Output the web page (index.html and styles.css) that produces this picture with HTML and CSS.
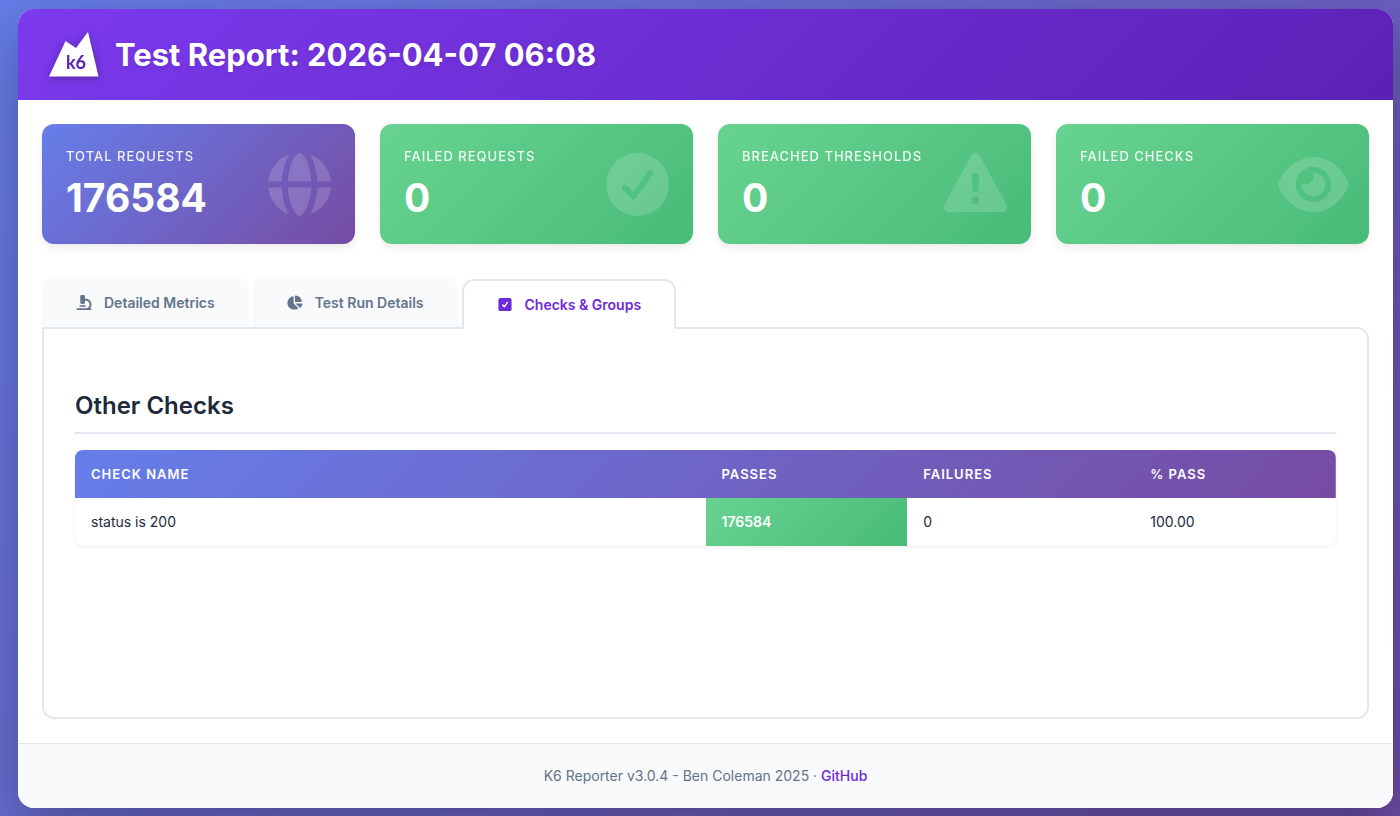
FILE: index.html
```html
<!DOCTYPE html>
<html lang="en">
<head>
    <meta charset="UTF-8">
    <meta name="viewport" content="width=device-width, initial-scale=1.0">
    <title>Test Report: 2026-04-07 06:08</title>
    <link rel="stylesheet" href="styles.css">
</head>
<body>
    <div class="container">
        <header>
            <svg class="logo" viewBox="0 0 50 45" aria-hidden="true">
                <path fill="#fff" d="M0 44.500L16.500 9l10.500 7L39 0l10.500 44.500z"/>
                <text class="logo-text" x="17" y="37">k6</text>
            </svg>
            <h1>Test Report: 2026-04-07 06:08</h1>
        </header>

        <main>
            <section class="cards">
                <div class="card">
                    <div>
                        <h2>Total Requests</h2>
                        <div class="value">176584</div>
                    </div>
                    <svg class="card-icon" viewBox="0 0 512 512" aria-hidden="true"><path d="M351.9 280l-190.9 0c2.9 64.5 17.2 123.9 37.500 167.400 11.400 24.500 23.700 41.800 35.100 52.400 11.200 10.500 18.900 12.200 22.900 12.200s11.700-1.700 22.900-12.200c11.400-10.600 23.700-28 35.100-52.400 20.300-43.500 34.600-102.900 37.500-167.400zM160.900 232l190.900 0C349 167.500 334.700 108.100 314.400 64.600 303 40.200 290.700 22.800 279.300 12.200 268.100 1.700 260.400 0 256.400 0s-11.700 1.700-22.900 12.200c-11.400 10.600-23.700 28-35.100 52.400-20.300 43.500-34.600 102.900-37.500 167.400zm-48 0C116.400 146.400 138.500 66.900 170.800 14.700 78.700 47.300 10.900 131.200 1.500 232l111.400 0zM1.500 280c9.400 100.800 77.200 184.700 169.300 217.300-32.300-52.200-54.400-131.700-57.900-217.300L1.500 280zm398.400 0c-3.500 85.600-25.600 165.100-57.900 217.300 92.100-32.700 159.900-116.500 169.300-217.300l-111.400 0zm111.400-48C501.900 131.200 434.100 47.300 342 14.700 374.300 66.900 396.400 146.400 399.900 232l111.400 0z"/></svg>
                </div>
                <div class="card good">
                    <div>
                        <h2>Failed Requests</h2>
                        <div class="value">0</div>
                    </div>
                    <svg class="card-icon" viewBox="0 0 512 512" aria-hidden="true"><path d="M256 512a256 256 0 1 1 0-512 256 256 0 1 1 0 512zM374 145.700c-10.700-7.800-25.700-5.400-33.500 5.300L221.100 315.200 169 263.100c-9.400-9.400-24.600-9.400-33.900 0s-9.400 24.600 0 33.900l72 72c5 5 11.900 7.500 18.800 7s13.400-4.100 17.500-9.800L379.300 179.200c7.800-10.700 5.400-25.700-5.300-33.500z"/></svg>
                </div>
                <div class="card good">
                    <div>
                        <h2>Breached Thresholds</h2>
                        <div class="value">0</div>
                    </div>
                    <svg class="card-icon" viewBox="0 0 512 512" aria-hidden="true"><path d="M256 0c14.700 0 28.200 8.100 35.200 21l216 400c6.700 12.400 6.400 27.400-.8 39.500S486.100 480 472 480L40 480c-14.100 0-27.200-7.400-34.400-19.500s-7.500-27.100-.8-39.500l216-400c7-12.900 20.500-21 35.200-21zm0 352a32 32 0 1 0 0 64 32 32 0 1 0 0-64zm0-192c-18.200 0-32.700 15.500-31.400 33.700l7.400 104c.9 12.500 11.400 22.300 23.900 22.300 12.600 0 23-9.700 23.900-22.300l7.400-104c1.300-18.200-13.100-33.700-31.400-33.700z"/></svg>
                </div>
                <div class="card good">
                    <div>
                        <h2>Failed Checks</h2>
                        <div class="value">0</div>
                    </div>
                    <svg class="card-icon wide" viewBox="0 0 576 512" aria-hidden="true"><path d="M288 32c-80.800 0-145.500 36.800-192.600 80.600C48.600 156 17.300 208 2.500 243.700c-3.300 7.900-3.300 16.700 0 24.600C17.300 304 48.600 356 95.400 399.400C142.500 443.200 207.200 480 288 480s145.500-36.800 192.600-80.600c46.800-43.500 78.100-95.400 93-131.100c3.300-7.900 3.300-16.700 0-24.600c-14.900-35.700-46.200-87.700-93-131.100C433.500 68.800 368.800 32 288 32zM144 256a144 144 0 1 1 288 0 144 144 0 1 1 -288 0zm144-64c0 35.300-28.700 64-64 64c-7.100 0-13.900-1.200-20.300-3.300c-5.500-1.800-11.900 1.600-11.700 7.400c.3 6.900 1.300 13.800 3.200 20.700c13.700 51.200 66.400 81.600 117.600 67.900s81.600-66.400 67.900-117.600c-11.100-41.500-47.800-69.400-88.600-71.100c-5.800-.2-9.200 6.100-7.400 11.700c2.100 6.400 3.300 13.200 3.300 20.300z"/></svg>
                </div>
            </section>

            <div class="tabs" role="tablist">
                <button class="tab" type="button" role="tab" aria-selected="false">
                    <svg class="tab-icon" viewBox="0 0 512 512" aria-hidden="true"><path d="M176 0c-26.500 0-48 21.500-48 48l0 208c0 26.500 21.500 48 48 48l64 0c26.500 0 48-21.500 48-48l0-64 32 0c70.700 0 128 57.300 128 128S390.700 448 320 448L32 448c-17.700 0-32 14.300-32 32s14.300 32 32 32l448 0c17.700 0 32-14.300 32-32s-14.300-32-32-32l-16.900 0c30.400-34 48.900-78.800 48.900-128 0-106-86-192-192-192l-32 0 0-80c0-26.500-21.500-48-48-48l-64 0zM120 352c-13.300 0-24 10.700-24 24s10.700 24 24 24l176 0c13.300 0 24-10.700 24-24s-10.700-24-24-24l-176 0z"/></svg>
                    Detailed Metrics
                </button>
                <button class="tab" type="button" role="tab" aria-selected="false">
                    <svg class="tab-icon" viewBox="16 0 576 512" aria-hidden="true"><path d="M304 240V16.600c0-9 7-16.600 16-16.600C443.700 0 544 100.300 544 224c0 9-7.600 16-16.600 16H304zM32 272C32 150.700 122.100 50.300 239 34.300c9.200-1.300 17 6.100 17 15.400V288L412.500 444.500c6.700 6.700 6.200 17.700-1.500 23.100C371.800 495.600 323.800 512 272 512C139.500 512 32 404.600 32 272zm526.400 16c9.300 0 16.600 7.800 15.400 17c-7.700 55.900-34.600 105.600-73.900 142.300c-6 5.600-15.400 5.200-21.200-.7L320 288H558.400z"/></svg>
                    Test Run Details
                </button>
                <button class="tab active" type="button" role="tab" aria-selected="true" aria-controls="checks">
                    <svg class="tab-icon" viewBox="0 0 512 512" aria-hidden="true"><rect x="32" y="32" width="448" height="448" rx="64"/><path class="tick" d="M176 270l60 60 104-144"/></svg>
                    Checks &amp; Groups
                </button>
            </div>

            <section class="panel" id="checks" role="tabpanel">
                <h2>Other Checks</h2>
                <table>
                    <thead>
                        <tr>
                            <th class="name">Check Name</th>
                            <th class="passes">Passes</th>
                            <th class="failures">Failures</th>
                            <th>% Pass</th>
                        </tr>
                    </thead>
                    <tbody>
                        <tr>
                            <td>status is 200</td>
                            <td class="good">176584</td>
                            <td>0</td>
                            <td>100.00</td>
                        </tr>
                    </tbody>
                </table>
            </section>
        </main>

        <footer>
            K6 Reporter v3.0.4 - Ben Coleman 2025 · <a href="https://github.com/benc-uk/k6-reporter">GitHub</a>
        </footer>
    </div>
</body>
</html>
```
FILE: styles.css
```css
* {
    box-sizing: border-box;
}

body {
    display: flex;
    min-height: 100vh;
    margin: 0;
    padding: 9px 7px 8px 18px;
    font-family: Inter, sans-serif;
    font-size: 14px;
    line-height: 24px;
    color: #1e293b;
    background: linear-gradient(135deg, #667eea 0%, #6c4da6 100%);
}

h1,
h2 {
    margin: 0;
}

.container {
    display: flex;
    flex-direction: column;
    flex: 1;
    min-width: 0;
    background: #fff;
    border-radius: 16px;
    overflow: hidden;
    box-shadow: 0 20px 60px rgba(0, 0, 0, 0.3);
}

header {
    display: flex;
    align-items: center;
    gap: 16px;
    padding: 20px 31px;
    color: #fff;
    background: linear-gradient(135deg, #7c3aed 0%, #5b21b6 100%);
}

header h1 {
    font-size: 31px;
    font-weight: 700;
    line-height: 51px;
    text-shadow: 0 2px 4px rgba(0, 0, 0, 0.1);
}

.logo {
    width: 50px;
    height: 45px;
    overflow: visible;
    filter: drop-shadow(0 2px 4px rgba(0, 0, 0, 0.3));
}

.logo-text {
    font-family: Lato, sans-serif;
    font-size: 18px;
    font-weight: 700;
    fill: #5b21b6;
}

main {
    display: flex;
    flex-direction: column;
    flex: 1;
    padding: 24px;
}

/* Summary cards */
.cards {
    display: grid;
    grid-template-columns: repeat(4, 1fr);
    gap: 25px;
    margin-bottom: 33px;
}

.card {
    display: flex;
    align-items: center;
    justify-content: space-between;
    height: 120px;
    padding: 0 24px;
    color: #fff;
    background: linear-gradient(135deg, #667eea 0%, #764ba2 100%);
    border-radius: 12px;
    box-shadow: 0 4px 8px rgba(0, 0, 0, 0.08);
}

.good {
    color: #fff;
    background: linear-gradient(135deg, #68d391 0%, #48bb78 100%);
}

.card h2 {
    margin-bottom: 8px;
    font-size: 13px;
    font-weight: 500;
    line-height: 20px;
    letter-spacing: 1px;
    text-transform: uppercase;
    white-space: nowrap;
    opacity: 0.9;
}

.card .value {
    font-size: 39px;
    font-weight: 700;
    line-height: 48px;
}

.card-icon {
    flex: none;
    width: 63px;
    height: 63px;
    fill: #fff;
    opacity: 0.16;
}

.card-icon.wide {
    width: 71px;
    margin-right: -4px;
}

/* Tabs */
.tabs {
    display: flex;
    align-items: flex-end;
    gap: 4px;
}

.tab {
    display: flex;
    align-items: center;
    gap: 12px;
    height: 50px;
    padding: 0 34px;
    font-family: inherit;
    font-size: 14px;
    font-weight: 600;
    color: #64748b;
    background: #f8fafc;
    border: none;
    border-radius: 12px 12px 0 0;
    cursor: pointer;
}

/* Sits over the top border of the panel */
.tab.active {
    z-index: 1;
    margin-bottom: -2px;
    padding: 0 33px 2px;
    color: #6d28d9;
    background: #fff;
    border: 2px solid #e2e8f0;
    border-bottom: none;
}

.tab-icon {
    width: 16px;
    height: 15px;
    fill: currentColor;
}

.tick {
    fill: none;
    stroke: #fff;
    stroke-width: 48;
    stroke-linecap: round;
    stroke-linejoin: round;
}

.panel {
    flex: 1;
    padding: 58px 31px 32px;
    border: 2px solid #e2e8f0;
    border-radius: 0 12px 12px 12px;
}

.panel h2 {
    margin-bottom: 16px;
    padding-bottom: 7px;
    font-size: 24px;
    font-weight: 600;
    line-height: 38px;
    border-bottom: 2px solid #e2e8f0;
}

table {
    width: 100%;
    table-layout: fixed;
    border-collapse: separate;
    border-spacing: 0;
    border-radius: 8px;
    overflow: hidden;
    box-shadow: 0 1px 3px rgba(0, 0, 0, 0.08);
}

thead tr {
    color: #fff;
    background: linear-gradient(135deg, #667eea 0%, #764ba2 100%);
}

th,
td {
    padding: 12px 16px;
    text-align: left;
}

th {
    font-size: 13px;
    font-weight: 600;
    letter-spacing: 1px;
    text-transform: uppercase;
}

.name {
    width: 50%;
}

.passes {
    width: 16%;
}

.failures {
    width: 18%;
}

td.good {
    font-weight: 600;
}

footer {
    padding: 20px 24px;
    text-align: center;
    color: #64748b;
    background: #f8fafc;
    border-top: 1px solid #e2e8f0;
}

footer a {
    font-weight: 500;
    color: #6d28d9;
    text-decoration: none;
}

footer a:hover {
    text-decoration: underline;
}
```
